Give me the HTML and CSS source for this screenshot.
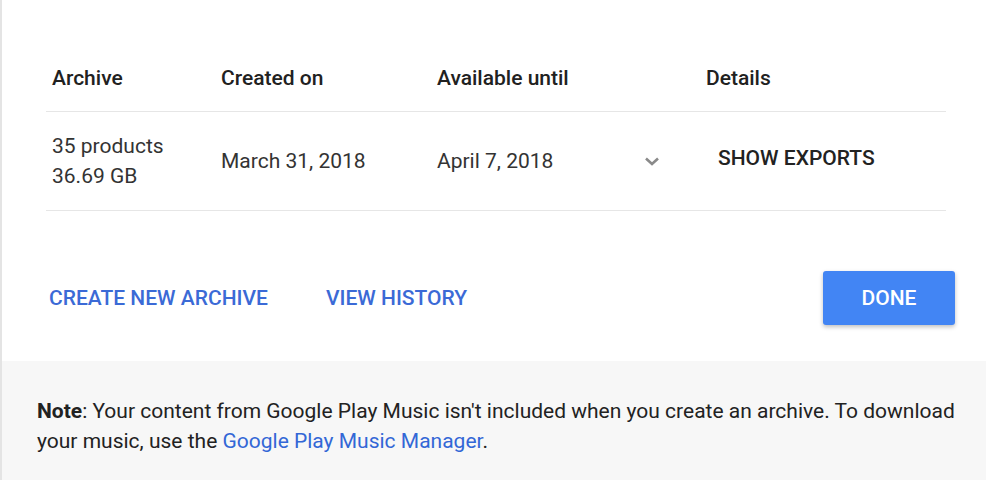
FILE: index.html
```html
<!DOCTYPE html>
<html>
<head>
<meta charset="utf-8">
<link rel="stylesheet" href="styles.css">
</head>
<body>
<div class="page">
  <div class="main">
    <div class="table">
      <div class="row head">
        <div class="cell">Archive</div>
        <div class="cell">Created on</div>
        <div class="cell">Available until</div>
        <div class="cell"></div>
        <div class="cell">Details</div>
      </div>
      <div class="row body">
        <div class="cell stack"><span>35 products</span><span>36.69 GB</span></div>
        <div class="cell">March 31, 2018</div>
        <div class="cell">April 7, 2018</div>
        <div class="cell chev">
          <svg width="18" height="12" viewBox="0 0 18 12"><path d="M3 3.5 L9 9 L15 3.5" fill="none" stroke="#8a8a8a" stroke-width="2.6"/></svg>
        </div>
        <div class="cell"><span class="show">SHOW EXPORTS</span></div>
      </div>
    </div>
    <div class="actions">
      <a class="link">CREATE NEW ARCHIVE</a>
      <a class="link">VIEW HISTORY</a>
      <span class="spacer"></span>
      <button class="done">DONE</button>
    </div>
  </div>
  <div class="footer">
    <p><b>Note</b>: Your content from Google Play Music isn't included when you create an archive. To download your music, use the <a class="flink">Google Play Music Manager</a>.</p>
  </div>
</div>
</body>
</html>
```
FILE: styles.css
```css
html, body { margin: 0; padding: 0; background: #fff; }
body { font-family: Roboto, "Noto Sans", Arial, sans-serif; color: #212121; }
.page { border-left: 2px solid #e4e4e4; height: 480px; display: flex; flex-direction: column; }
.main { padding: 44px 31px 0 44px; }
.table { width: 900px; }
.row { display: grid; grid-template-columns: 169px 216px 206px 63px 1fr; border-bottom: 1px solid #e6e6e6; align-items: center; }
.row.head { height: 67px; font-size: 21px; font-weight: 500; color: #212121; }
.row.body { height: 98px; font-size: 21px; color: #333; }
.cell { padding-left: 6px; }
.stack { display: flex; flex-direction: column; line-height: 30px; }
.chev { padding-left: 6px; display: flex; align-items: center; height: 20px; }
.show { display: inline-block; padding-left: 12px; font-weight: 500; color: #222; margin-bottom: 6px; }
.actions { display: flex; align-items: center; box-sizing: border-box; height: 150px; padding-top: 24px; }
.link { color: #3b6ad6; font-size: 21px; font-weight: 500; margin-left: 3px; margin-right: 58px; cursor: pointer; }
.link + .link { margin-left: 0; }
.spacer { flex: 1; }
.done { width: 132px; height: 54px; background: #4285f4; border: 0; border-radius: 3px; color: #fff; font-family: inherit; font-size: 21px; font-weight: 500; box-shadow: 0 2px 4px rgba(0,0,0,0.25); }
.footer { flex: 1; background: #f7f7f7; padding: 35px 20px 0 35px; }
.footer p { margin: 0; font-size: 21px; line-height: 30px; color: #222; }
.footer b { font-weight: 700; }
.flink { color: #3367d6; }
```
